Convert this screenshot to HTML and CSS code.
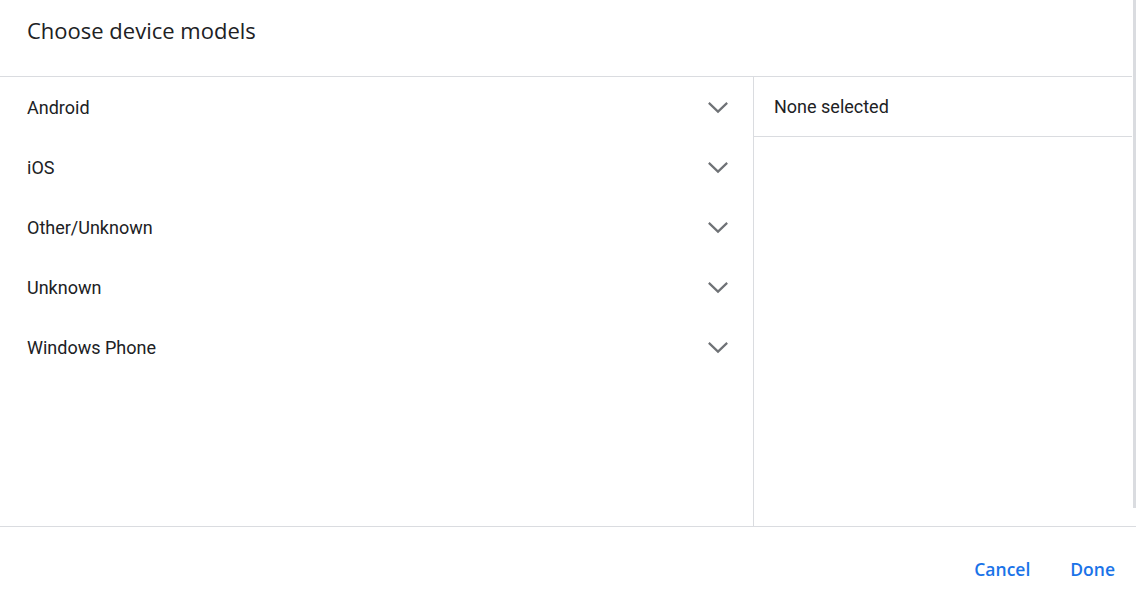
FILE: index.html
```html
<!DOCTYPE html>
<html lang="en">
  <head>
    <meta charset="UTF-8" />
    <title>Choose device models</title>
    <link rel="stylesheet" href="styles.css">
  </head>
  <body>
    <div class="dialog">
      <div class="scroll-area">
        <div class="content">
          <div class="title">Choose device models</div>
          <div class="panels">
            <!-- lista de plataformas -->
            <div class="groups">
              <div class="group">
                <span>Android</span>
                <svg class="chevron" viewBox="0 0 24 14"><polyline points="2,2 12,11.5 22,2" /></svg>
              </div>
              <div class="group">
                <span>iOS</span>
                <svg class="chevron" viewBox="0 0 24 14"><polyline points="2,2 12,11.5 22,2" /></svg>
              </div>
              <div class="group">
                <span>Other/Unknown</span>
                <svg class="chevron" viewBox="0 0 24 14"><polyline points="2,2 12,11.5 22,2" /></svg>
              </div>
              <div class="group">
                <span>Unknown</span>
                <svg class="chevron" viewBox="0 0 24 14"><polyline points="2,2 12,11.5 22,2" /></svg>
              </div>
              <div class="group">
                <span>Windows Phone</span>
                <svg class="chevron" viewBox="0 0 24 14"><polyline points="2,2 12,11.5 22,2" /></svg>
              </div>
            </div>
            <!-- selecionados -->
            <div class="selected">
              <div class="selected-head">None selected</div>
            </div>
          </div>
        </div>
        <div class="scrollbar"><div class="thumb"></div></div>
      </div>
      <div class="actions">
        <button class="text-btn">Cancel</button>
        <button class="text-btn">Done</button>
      </div>
    </div>
  </body>
</html>
```

FILE: styles.css
```css
body {
  margin: 0;
  font-family: Roboto, Arial, sans-serif;
  color: #202124;
  background: #fff;
}

.dialog {
  display: flex;
  flex-direction: column;
  height: 595px;
}

.scroll-area {
  display: flex;
  height: 526px;
  border-bottom: 1px solid #dadce0;
}

.content {
  flex: 1;
  display: flex;
  flex-direction: column;
}

.title {
  height: 77px;
  box-sizing: border-box;
  padding: 14px 27px 0;
  font-family: "Open Sans", Arial, sans-serif;
  font-size: 22px;
  line-height: 32px;
  border-bottom: 1px solid #dadce0;
}

.panels {
  flex: 1;
  display: flex;
}

.groups {
  width: 753px;
  border-right: 1px solid #dadce0;
}

.group {
  height: 60px;
  display: flex;
  align-items: center;
  justify-content: space-between;
  padding: 0 24px 0 27px;
  font-size: 18px;
}

.chevron {
  width: 22px;
  height: 13px;
  fill: none;
  stroke: #6f7276;
  stroke-width: 2.4;
}

.selected {
  flex: 1;
}

.selected-head {
  height: 59px;
  display: flex;
  align-items: center;
  padding-left: 20px;
  font-size: 18px;
  border-bottom: 1px solid #dadce0;
}

.scrollbar {
  width: 4px;
}

.scrollbar .thumb {
  margin-left: 1px;
  width: 3px;
  height: 508px;
  background: #dadce0;
}

.actions {
  flex: 1;
  display: flex;
  justify-content: flex-end;
  align-items: center;
  gap: 14px;
  padding: 16px 8px 0 0;
}

.text-btn {
  background: none;
  border: none;
  padding: 8px 13px;
  font-family: "Open Sans", Arial, sans-serif;
  font-size: 17.5px;
  font-weight: 600;
  color: #1a73e8;
  cursor: pointer;
}
```
